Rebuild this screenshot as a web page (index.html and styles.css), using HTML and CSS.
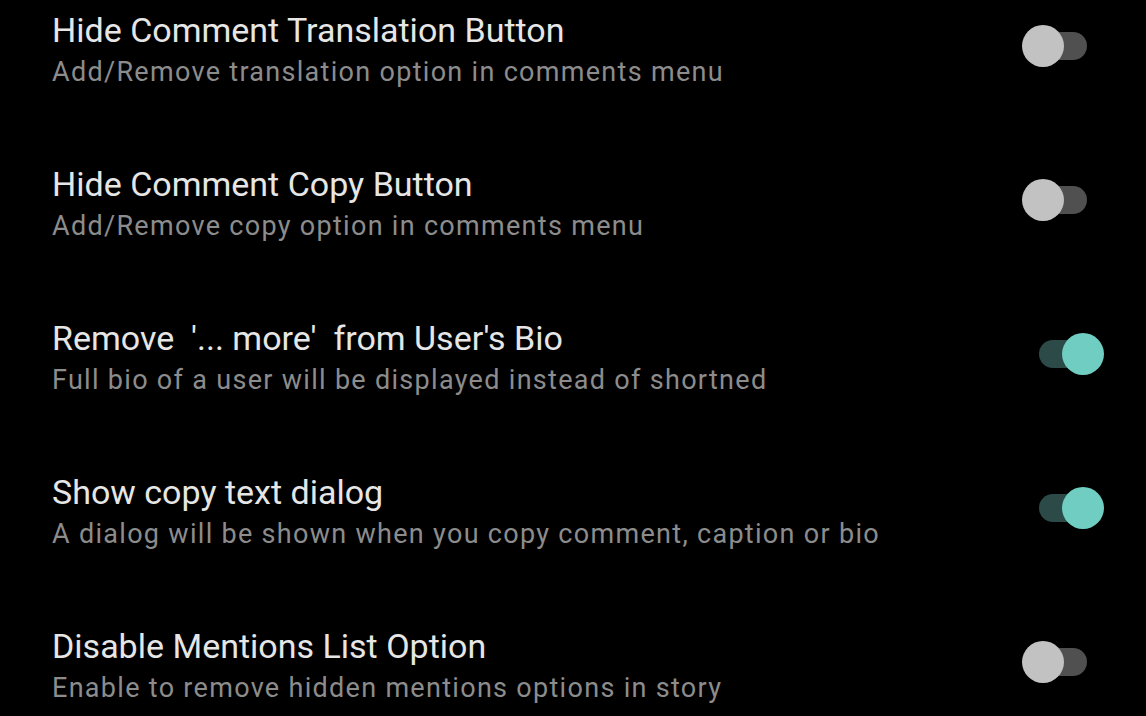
FILE: index.html
```html
<!DOCTYPE html>
<html lang="en">
<head>
<meta charset="utf-8">
<title>Settings</title>
<link rel="stylesheet" href="styles.css">
</head>
<body>
<div class="list">
  <div class="row">
    <div class="text">
      <div class="title">Hide Comment Translation Button</div>
      <div class="sub">Add/Remove translation option in comments menu</div>
    </div>
    <div class="toggle"><span class="track"></span><span class="thumb"></span></div>
  </div>
  <div class="row">
    <div class="text">
      <div class="title">Hide Comment Copy Button</div>
      <div class="sub">Add/Remove copy option in comments menu</div>
    </div>
    <div class="toggle"><span class="track"></span><span class="thumb"></span></div>
  </div>
  <div class="row">
    <div class="text">
      <div class="title">Remove&nbsp; '... more'&nbsp; from User's Bio</div>
      <div class="sub">Full bio of a user will be displayed instead of shortned</div>
    </div>
    <div class="toggle on"><span class="track"></span><span class="thumb"></span></div>
  </div>
  <div class="row">
    <div class="text">
      <div class="title">Show copy text dialog</div>
      <div class="sub">A dialog will be shown when you copy comment, caption or bio</div>
    </div>
    <div class="toggle on"><span class="track"></span><span class="thumb"></span></div>
  </div>
  <div class="row">
    <div class="text">
      <div class="title">Disable Mentions List Option</div>
      <div class="sub">Enable to remove hidden mentions options in story</div>
    </div>
    <div class="toggle"><span class="track"></span><span class="thumb"></span></div>
  </div>
</div>
</body>
</html>
```

FILE: styles.css
```css
html, body {
  margin: 0;
  padding: 0;
  background: #000;
}
body {
  width: 1146px;
  height: 716px;
  overflow: hidden;
  font-family: Roboto, "Noto Sans", sans-serif;
}
.list {
  display: flex;
  flex-direction: column;
  gap: 76px;
  padding-top: 10px;
}
.row {
  display: flex;
  align-items: flex-start;
  padding: 0 41px 0 52px;
}
.text {
  flex: 1;
  display: flex;
  flex-direction: column;
  gap: 6px;
}
.title {
  font-size: 34px;
  line-height: 40px;
  color: #e6e6e6;
  white-space: nowrap;
}
.sub {
  font-size: 27px;
  line-height: 32px;
  letter-spacing: 1.3px;
  color: #8c8c8c;
  white-space: nowrap;
}
.toggle {
  position: relative;
  width: 83px;
  height: 42px;
  margin-top: 15px;
  flex: none;
}
.track {
  position: absolute;
  left: 17px;
  top: 7px;
  width: 48px;
  height: 28px;
  border-radius: 14px;
  background: #505050;
}
.thumb {
  position: absolute;
  left: 0;
  top: 0;
  width: 42px;
  height: 42px;
  border-radius: 50%;
  background: #c2c2c2;
}
.toggle.on .track {
  background: #2c4a47;
}
.toggle.on .thumb {
  left: 40px;
  background: #6fcdc2;
}
```
